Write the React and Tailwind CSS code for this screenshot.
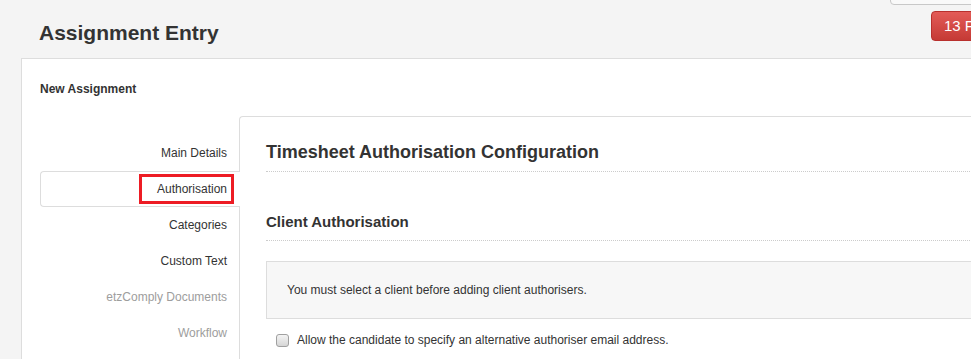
export default function App() {
  const navItems = [
    { label: "Main Details", muted: false },
    { label: "Authorisation", active: true },
    { label: "Categories", muted: false },
    { label: "Custom Text", muted: false },
    { label: "etzComply Documents", muted: true },
    { label: "Workflow", muted: true },
  ];
  return (
    <div className="relative w-[971px] h-[359px] overflow-hidden bg-[#f4f4f4] font-['Liberation_Sans',Arial,sans-serif] text-[#333]">
      {/* top-right buttons */}
      <div className="absolute left-[890px] top-[-12px] w-[120px] h-[17px] rounded-[4px] border border-[#c8c8c8] bg-[#f9f9f9]" />
      <div className="absolute left-[931px] top-[11px] h-[30px] w-[80px] rounded-[4px] border border-[#b8302d] bg-linear-to-b from-[#e35b57] to-[#c53a35] text-white text-[15px] leading-[28px] pl-[12px] whitespace-nowrap">
        13 F
      </div>

      {/* header */}
      <div className="h-[58px] pl-[39px] pt-[21px]">
        <h1 className="text-[21px] leading-[24px] font-bold text-[#333]">Assignment Entry</h1>
      </div>

      {/* main panel */}
      <div className="ml-[21px] w-[1000px] bg-white border border-[#ddd]">
        <div className="pl-[18px] pt-[23px]">
          <div className="text-[12px] leading-[14px] font-bold text-[#333]">New Assignment</div>
        </div>

        <div className="mt-[20px] flex">
          {/* nav */}
          <div className="w-[217px] pl-[18px] pt-[19px] shrink-0">
            {navItems.map((item) =>
              item.active ? (
                <div
                  key={item.label}
                  className="relative z-10 -mr-px h-[36px] border border-r-0 border-[#ddd] rounded-l-[4px] bg-white flex items-center justify-end pr-[13px] text-[12px] text-[#333]"
                >
                  {item.label}
                  <div className="absolute left-[98px] top-[2px] w-[95px] h-[30px] border-[3px] border-[#ed1c24]" />
                </div>
              ) : (
                <div
                  key={item.label}
                  className={`h-[36px] flex items-center justify-end pr-[12px] text-[12px] ${
                    item.muted ? "text-[#9d9d9d]" : "text-[#333]"
                  }`}
                >
                  {item.label}
                </div>
              )
            )}
          </div>

          {/* content */}
          <div className="flex-1 h-[260px] border-l border-t border-[#ddd] rounded-tl-[4px] pl-[26px]">
            <div className="pt-[24px] pb-[8px] border-b border-dotted border-[#ccc]">
              <h2 className="text-[18px] leading-[22px] font-bold text-[#333]">
                Timesheet Authorisation Configuration
              </h2>
            </div>
            <div className="pt-[41px] pb-[9px] border-b border-dotted border-[#ccc]">
              <h3 className="text-[15px] leading-[18px] font-bold text-[#333]">Client Authorisation</h3>
            </div>
            <div className="mt-[20px] h-[58px] border border-[#ddd] bg-[#f7f7f7] flex items-center pl-[20px] text-[12px] text-[#333]">
              You must select a client before adding client authorisers.
            </div>
            <div className="mt-[14px] h-[14px] flex items-center">
              <div className="ml-[10px] w-[13px] h-[13px] rounded-[3px] border border-[#a0a0a0] bg-linear-to-b from-[#f4f4f4] to-[#d6d6d6]" />
              <span className="ml-[8px] text-[12px] text-[#333]">
                Allow the candidate to specify an alternative authoriser email address.
              </span>
            </div>
          </div>
        </div>
      </div>
    </div>
  );
}
